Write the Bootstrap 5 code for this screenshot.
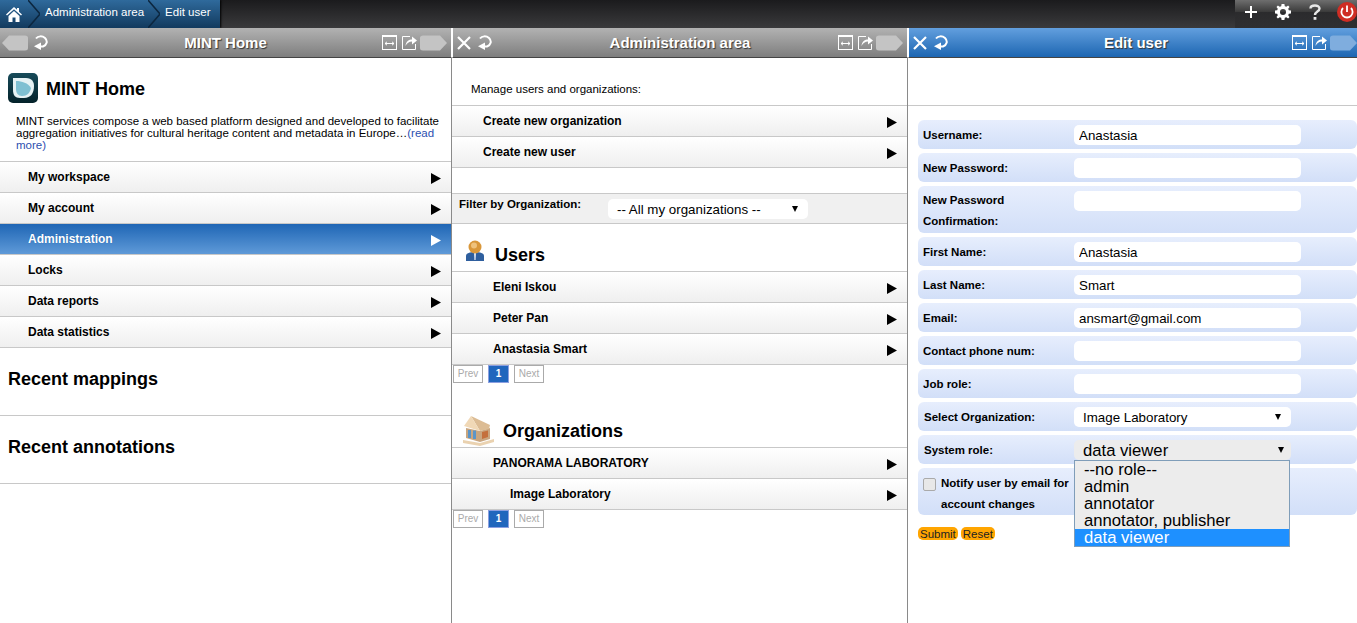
<!DOCTYPE html>
<html lang="en">
<head>
    <meta charset="UTF-8">
    <meta name="viewport" content="width=device-width, initial-scale=1.0">
    <title>MINT - Edit user</title>
    <link rel="stylesheet" href="https://cdn.jsdelivr.net/npm/bootstrap@5.3.0/dist/css/bootstrap.min.css">
    <script defer src="https://cdn.jsdelivr.net/npm/bootstrap@5.3.0/dist/js/bootstrap.bundle.min.js"></script>
    <style>
        html, body { height: 100%; overflow: hidden; }
        body { font-family: "Liberation Sans", Arial, sans-serif; font-size: 11.5px; color: #000; background: #fff; }

        /* top bar */
        .topbar { height: 28px; background: linear-gradient(#1b1b1d, #3a3a3c); }
        .crumbs { height: 28px; width: 220px; background: linear-gradient(#2f6a9c, #123a5e); color: #fff; font-size: 11.5px; box-shadow: 1px 0 2px #000; }
        .crumb-home { width: 28px; padding-left: 6px; }
        .crumb-sep { width: 12px; height: 28px; flex: none; }
        .crumb-text { padding: 0 4px 2px 5px; white-space: nowrap; }
        .tools { width: 122px; height: 28px; background: linear-gradient(#6e6e6e, #3a3a3a 12px, #2b2b2d 12px, #2f2f31); }
        .tool-slot { width: 32px; height: 24px; flex: none; }

        /* panels */
        .panels { height: 595px; }
        .panel-one { width: 452px; }
        .panel-two { width: 456px; }
        .panel-three { width: 449px; }
        .panel-body-one, .panel-body-two { height: 565px; border-right: 1px solid #8a8a8a; }
        .panel-head { height: 30px; display: grid; grid-template-columns: 1fr auto 1fr; align-items: center; border-bottom: 1px solid #444; border-left: 1px solid #fff; }
        .panel-one .panel-head { border-left: 0; border-right: 1px solid #fff; }
        .panel-two .panel-head { border-right: 1px solid #fff; }
        .head-gray { background: linear-gradient(#b2b2b2, #7e7e7e); }
        .head-blue { background: linear-gradient(#629fde, #1d66b2); }
        .head-title { font-size: 15px; font-weight: 700; color: #fff; text-shadow: 1px 1px 1px #333; padding-top: 1px; }
        .panel-three .head-title { padding-left: 6px; }
        .head-left { padding-left: 2px; gap: 5px; }
        .panel-two .head-left, .panel-three .head-left { padding-left: 4px; gap: 6px; }
        .head-right { gap: 5px; padding-right: 4px; }
        .head-right svg:last-child { margin-left: -2px; }
        .panel-three .head-right { padding-right: 0; }

        /* rows */
        .row-list { border-top: 1px solid #c8c8c8; }
        .nav-row { height: 31px; border-bottom: 1px solid #c8c8c8; background: linear-gradient(#fff, #efefef); font-size: 12px; font-weight: 700; padding: 6px 10px 0 28px; color: #000; }
        .panel-body-two .nav-row { padding-left: 31px; }
        .nav-row.is-active { background: linear-gradient(#1f66b5, #5f9ad8); color: #fff; text-shadow: 0 0 1px #1c5ea8; }
        .nav-row svg { margin-top: 5px; flex: none; width: 10px; height: 11px; }
        .panel-body-two .sub-row { padding-left: 41px; }
        .panel-body-two .sub-row-deep { padding-left: 58px; }

        .home-title { padding: 15px 0 0 8px; height: 57px; }
        .mint-h { font-size: 18px; font-weight: 700; margin: 0; line-height: 30px; }
        .home-title .mint-h { margin-top: 1px; }
        .mint-blurb { font-size: 11.5px; line-height: 12px; margin: 0 8px 9px 16px; height: 37px; }
        .mint-blurb a { color: #2c4fb0; text-decoration: none; }
        .recent-box { height: 68px; border-bottom: 1px solid #c8c8c8; padding: 16px 0 0 8px; }

        .manage-note { padding: 24px 0 0 19px; height: 47px; line-height: 14px; }
        .filter-bar { height: 31px; margin-top: 25px; background: #f0f0f0; border-top: 1px solid #c8c8c8; border-bottom: 1px solid #c8c8c8; font-weight: 700; padding: 2px 0 0 7px; }
        .filter-label { width: 149px; }
        .fake-select { height: 20px; border-radius: 5px; background: #fff; font-size: 13.33px; line-height: 19px; padding: 1px 10px 0 9px; }
        .filter-select { width: 200px; margin-top: 3px; font-weight: 400; }
        .sel-arrow { width: 0; height: 0; border-left: 3px solid transparent; border-right: 3px solid transparent; border-top: 6px solid #000; flex: none; margin-top: -2px; }
        .group-head { height: 47px; }
        .group-users { padding: 16px 0 0 14px; gap: 11px; }
        .group-orgs { height: 62px; padding: 31px 0 0 11px; gap: 9px; }
        .pager-wrap { padding: 0 0 0 1px; gap: 5px; height: 20px; }
        .pager-cell { height: 18px; border: 1px solid #aaa; font-size: 10px; color: #aaa; width: 30px; text-align: center; line-height: 16px; background: #fff; }
        .pager-cell.is-now { background: #2066bd; border-color: #8c9fe0; color: #fff; width: 21px; font-weight: 700; }

        /* form */
        .edit-space { height: 48px; border-bottom: 1px solid #c8c8c8; }
        .edit-form { padding: 14px 0 0 10px; position: relative; }
        .form-line { background: linear-gradient(#e7eefd, #d2dff8); border-radius: 6px; min-height: 29px; margin-bottom: 4px; padding: 5px 0 0 5px; font-weight: 700; }
        .form-line label, .line-label { width: 151px; flex: none; line-height: 21px; margin: 0; }
        .line-label { padding-left: 1px; }
        .form-line input.form-control { width: 227px; height: 20px; padding: 1px 5px 0; font-size: 13.33px; border: 0; border-radius: 5px; font-family: inherit; color: #000; background: #fff; min-height: 0; line-height: 19px; }
        .line-tall { height: 47px; }
        .line-tall label { margin-top: -1px; }
        .select-org { width: 217px; font-weight: 400; }
        .select-org.is-open { background: #ececec; font-size: 16.67px; padding-right: 7px; }
        .line-check { padding-top: 6px; }
        .line-check .form-check-input { width: 13px; height: 13px; margin: 4px 5px 0 0; border-radius: 2px; border: 1px solid #aaa; background-color: #e8e8e8; flex: none; }
        .check-text { width: 135px; line-height: 21px; margin-top: -1px; }
        .button-line { gap: 3px; padding-top: 8px; }
        .orange-btn { background: #ffa500; border: 0; border-radius: 5px; padding: 0 2px; font-size: 11.5px; line-height: 12px; height: 13px; color: #222; font-family: inherit; }
        .role-menu { position: absolute; left: 166px; top: 354px; width: 216px; height: 87px; border: 1px solid #7f9db9; background: #ececec; font-size: 16.67px; line-height: 17px; z-index: 5; list-style: none; margin: 0; padding: 0; font-weight: 400; }
        .role-menu li { height: 17px; padding-left: 9px; }
        .role-menu li.is-picked { background: #1e90ff; color: #fff; }
    </style>
</head>
<body>
    <!-- shared icons for the panel headers -->
    <svg class="d-none">
        <symbol id="ic-back" viewBox="0 0 26 16"><path d="M0 8 L7 0.5 H23 Q26 0.5 26 3 V13 Q26 15.5 23 15.5 H7 Z"/></symbol>
        <symbol id="ic-next" viewBox="0 0 27 16"><path d="M27 8 L20 0.5 H3 Q0 0.5 0 3 V13 Q0 15.5 3 15.5 H20 Z"/></symbol>
        <symbol id="ic-close" viewBox="0 0 14 14"><path d="M1 1 L13 13 M13 1 L1 13" stroke="#fff" stroke-width="2.2"/></symbol>
        <symbol id="ic-reload" viewBox="0 0 15 15"><path fill="none" stroke="#fff" stroke-width="2" d="M3 3.5 C5 1 9 0.5 12 3 C15 6 14 10 10 11.5 L7 11.5"/><path fill="#fff" d="M8 7.5 V15 L1 11.2 Z"/></symbol>
        <symbol id="ic-fit" viewBox="0 0 15 15"><rect x=".5" y=".5" width="14" height="14" fill="none" stroke="#fff"/><rect width="15" height="2" fill="#fff"/><path d="M3 8.5 H12 M3 8.5 L5 6.8 M3 8.5 L5 10.2 M12 8.5 L10 6.8 M12 8.5 L10 10.2" stroke="#fff" fill="none"/></symbol>
        <symbol id="ic-share" viewBox="0 0 15 15"><path d="M8 1.5 H.5 V14.5 H13.5 V9" fill="none" stroke="#fff"/><path d="M3.5 11 C4 6 7 4.5 10 4.5 V1.5 L15 5.5 L10 9.5 V6.5 C7 6.5 5 8 3.5 11 Z" fill="#fff"/></symbol>
        <symbol id="ic-go" viewBox="0 0 11 12"><path d="M0 0 L11 6 L0 12 Z"/></symbol>
    </svg>

    <!-- top bar -->
    <div class="topbar d-flex justify-content-between">
        <div class="crumbs d-flex align-items-center">
            <div class="crumb-home d-flex align-items-center">
                <svg width="16" height="15" viewBox="0 0 16 15"><path fill="#fff" d="M8 0 L11 2.8 V1 H13 V4.7 L16 7.5 L15 8.5 L8 2.2 L1 8.5 L0 7.5 Z M2.5 9 L8 4 L13.5 9 V15 H9.5 V10.5 H6.5 V15 H2.5 Z"/></svg>
            </div>
            <svg class="crumb-sep" viewBox="0 0 12 28"><path d="M0 0 L12 14 L0 28" fill="none" stroke="#0c2740" stroke-width="1.5"/></svg>
            <div class="crumb-text">Administration area</div>
            <svg class="crumb-sep" viewBox="0 0 12 28"><path d="M0 0 L12 14 L0 28" fill="none" stroke="#0c2740" stroke-width="1.5"/></svg>
            <div class="crumb-text">Edit user</div>
        </div>
        <div class="tools d-flex">
            <div class="tool-slot d-flex align-items-center justify-content-center">
                <svg width="12" height="12" viewBox="0 0 12 12"><path fill="#fff" d="M5 0 H7 V5 H12 V7 H7 V12 H5 V7 H0 V5 H5 Z"/></svg>
            </div>
            <div class="tool-slot d-flex align-items-center justify-content-center">
                <svg width="16" height="16" viewBox="0 0 16 16"><path fill="#fff" fill-rule="evenodd" d="M6.6 0 H9.4 L9.8 2.2 L11.3 2.8 L13.1 1.5 L14.5 2.9 L13.2 4.7 L13.8 6.2 L16 6.6 V9.4 L13.8 9.8 L13.2 11.3 L14.5 13.1 L13.1 14.5 L11.3 13.2 L9.8 13.8 L9.4 16 H6.6 L6.2 13.8 L4.7 13.2 L2.9 14.5 L1.5 13.1 L2.8 11.3 L2.2 9.8 L0 9.4 V6.6 L2.2 6.2 L2.8 4.7 L1.5 2.9 L2.9 1.5 L4.7 2.8 L6.2 2.2 Z M8 5 A3 3 0 1 0 8 11 A3 3 0 1 0 8 5 Z"/></svg>
            </div>
            <div class="tool-slot d-flex align-items-center justify-content-center">
                <svg width="12" height="16" viewBox="0 0 12 16"><path fill="none" stroke="#e8e8e8" stroke-width="2.4" d="M1.5 4.5 C1.5 0.5 10.5 0.5 10.5 4.5 C10.5 7.5 6 7.5 6 11"/><rect x="4.6" y="13" width="2.8" height="2.8" fill="#e8e8e8"/></svg>
            </div>
            <div class="tool-slot d-flex align-items-center justify-content-center">
                <svg width="20" height="20" viewBox="0 0 20 20"><circle cx="10" cy="10" r="10" fill="#cf2d24"/><path d="M6 6 A5.6 5.6 0 1 0 14 6 M10 3.5 V10" fill="none" stroke="#fff" stroke-width="1.8"/></svg>
            </div>
        </div>
    </div>

    <div class="panels d-flex">
        <!-- MINT Home -->
        <section class="panel-one flex-none">
            <header class="panel-head head-gray">
                <div class="head-left d-flex align-items-center">
                    <svg width="26" height="16" fill="#c4c4c4"><use href="#ic-back"/></svg>
                    <svg width="15" height="15"><use href="#ic-reload"/></svg>
                </div>
                <div class="head-title">MINT Home</div>
                <div class="head-right d-flex align-items-center justify-content-end">
                    <svg width="15" height="15"><use href="#ic-fit"/></svg>
                    <svg width="15" height="15"><use href="#ic-share"/></svg>
                    <svg width="27" height="16" fill="#c4c4c4"><use href="#ic-next"/></svg>
                </div>
            </header>
            <div class="panel-body-one">
                <div class="home-title d-flex align-items-start gap-2">
                    <svg width="30" height="30" viewBox="0 0 30 30"><defs><linearGradient id="lg1" x1="0" y1="0" x2="0" y2="1"><stop offset="0" stop-color="#174b5a"/><stop offset="1" stop-color="#04222a"/></linearGradient></defs><rect width="30" height="30" rx="5" fill="url(#lg1)"/><path d="M5 5 H18 C24 5 26 9 26 13 C26 20 23 25 16 25 H12 C7 25 5 22 5 17 Z" fill="#e6f2f4"/><path d="M8 8 C14 8 20 10 23 15 C22 20 19 23 14 23 C10 23 8 20 8 16 Z" fill="#7fc0d2"/></svg>
                    <h1 class="mint-h">MINT Home</h1>
                </div>
                <p class="mint-blurb">MINT services compose a web based platform designed and developed to facilitate aggregation initiatives for cultural heritage content and metadata in Europe…<a href="#">(read more)</a></p>
                <div class="row-list">
                    <div class="nav-row d-flex justify-content-between"><span>My workspace</span><svg><use href="#ic-go"/></svg></div>
                    <div class="nav-row d-flex justify-content-between"><span>My account</span><svg><use href="#ic-go"/></svg></div>
                    <div class="nav-row is-active d-flex justify-content-between"><span>Administration</span><svg fill="#fff"><use href="#ic-go"/></svg></div>
                    <div class="nav-row d-flex justify-content-between"><span>Locks</span><svg><use href="#ic-go"/></svg></div>
                    <div class="nav-row d-flex justify-content-between"><span>Data reports</span><svg><use href="#ic-go"/></svg></div>
                    <div class="nav-row d-flex justify-content-between"><span>Data statistics</span><svg><use href="#ic-go"/></svg></div>
                </div>
                <div class="recent-box"><h2 class="mint-h">Recent mappings</h2></div>
                <div class="recent-box"><h2 class="mint-h">Recent annotations</h2></div>
            </div>
        </section>

        <!-- Administration area -->
        <section class="panel-two flex-none">
            <header class="panel-head head-gray">
                <div class="head-left d-flex align-items-center">
                    <svg width="14" height="14"><use href="#ic-close"/></svg>
                    <svg width="15" height="15"><use href="#ic-reload"/></svg>
                </div>
                <div class="head-title">Administration area</div>
                <div class="head-right d-flex align-items-center justify-content-end">
                    <svg width="15" height="15"><use href="#ic-fit"/></svg>
                    <svg width="15" height="15"><use href="#ic-share"/></svg>
                    <svg width="27" height="16" fill="#c4c4c4"><use href="#ic-next"/></svg>
                </div>
            </header>
            <div class="panel-body-two">
                <div class="manage-note">Manage users and organizations:</div>
                <div class="row-list">
                    <div class="nav-row d-flex justify-content-between"><span>Create new organization</span><svg><use href="#ic-go"/></svg></div>
                    <div class="nav-row d-flex justify-content-between"><span>Create new user</span><svg><use href="#ic-go"/></svg></div>
                </div>
                <div class="filter-bar d-flex">
                    <div class="filter-label">Filter by Organization:</div>
                    <div class="fake-select filter-select d-flex align-items-center justify-content-between"><span>-- All my organizations --</span><i class="sel-arrow"></i></div>
                </div>
                <div class="group-head group-users d-flex">
                    <svg width="18" height="21" viewBox="0 0 18 21"><path d="M0 21 V16 C0 13 4 12 9 12 C14 12 18 13 18 16 V21 Z" fill="#2f5f9e"/><path d="M8 13 H10 L9.6 20 H8.4 Z" fill="#dfe8f5"/><circle cx="9" cy="7" r="6.5" fill="#d9973a"/><circle cx="8" cy="5.5" r="3" fill="#efc27c"/></svg>
                    <h2 class="mint-h">Users</h2>
                </div>
                <div class="row-list">
                    <div class="nav-row sub-row d-flex justify-content-between"><span>Eleni Iskou</span><svg><use href="#ic-go"/></svg></div>
                    <div class="nav-row sub-row d-flex justify-content-between"><span>Peter Pan</span><svg><use href="#ic-go"/></svg></div>
                    <div class="nav-row sub-row d-flex justify-content-between"><span>Anastasia Smart</span><svg><use href="#ic-go"/></svg></div>
                </div>
                <div class="pager-wrap d-flex">
                    <div class="pager-cell">Prev</div>
                    <div class="pager-cell is-now">1</div>
                    <div class="pager-cell">Next</div>
                </div>
                <div class="group-head group-orgs d-flex">
                    <svg width="31" height="30" viewBox="0 0 31 30"><path d="M3 12 L17 15 L27 12 V23 L17 26 L3 22 Z" fill="#c9a67f"/><path d="M5 14 H8 V22 H5 Z M10 14.5 H13 V23 H10 Z" fill="#5b95c8"/><path d="M19 16 L25 14.5 V21 L19 23 Z" fill="#c4703c"/><path d="M8 0 L27 9 L26 13 L17 15 Z" fill="#dcbc94"/><path d="M1 10 L8 0 L17 15 Z" fill="#f0d8b6"/><path d="M0 24 L17 27 L31 23 V26 L17 30 L0 27 Z" fill="#ead2b0"/></svg>
                    <h2 class="mint-h">Organizations</h2>
                </div>
                <div class="row-list">
                    <div class="nav-row sub-row d-flex justify-content-between"><span>PANORAMA LABORATORY</span><svg><use href="#ic-go"/></svg></div>
                    <div class="nav-row sub-row-deep d-flex justify-content-between"><span>Image Laboratory</span><svg><use href="#ic-go"/></svg></div>
                </div>
                <div class="pager-wrap d-flex">
                    <div class="pager-cell">Prev</div>
                    <div class="pager-cell is-now">1</div>
                    <div class="pager-cell">Next</div>
                </div>
            </div>
        </section>

        <!-- Edit user -->
        <section class="panel-three flex-none">
            <header class="panel-head head-blue">
                <div class="head-left d-flex align-items-center">
                    <svg width="14" height="14"><use href="#ic-close"/></svg>
                    <svg width="15" height="15"><use href="#ic-reload"/></svg>
                </div>
                <div class="head-title">Edit user</div>
                <div class="head-right d-flex align-items-center justify-content-end">
                    <svg width="15" height="15"><use href="#ic-fit"/></svg>
                    <svg width="15" height="15"><use href="#ic-share"/></svg>
                    <svg width="27" height="16" fill="#7fadde"><use href="#ic-next"/></svg>
                </div>
            </header>
            <div class="edit-space"></div>
            <form class="edit-form">
                <div class="form-line d-flex"><label>Username:</label><input class="form-control" type="text" value="Anastasia"></div>
                <div class="form-line d-flex"><label>New Password:</label><input class="form-control" type="text"></div>
                <div class="form-line line-tall d-flex"><label>New Password Confirmation:</label><input class="form-control" type="text"></div>
                <div class="form-line d-flex"><label>First Name:</label><input class="form-control" type="text" value="Anastasia"></div>
                <div class="form-line d-flex"><label>Last Name:</label><input class="form-control" type="text" value="Smart"></div>
                <div class="form-line d-flex"><label>Email:</label><input class="form-control" type="text" value="ansmart@gmail.com"></div>
                <div class="form-line d-flex"><label>Contact phone num:</label><input class="form-control" type="text"></div>
                <div class="form-line d-flex"><label>Job role:</label><input class="form-control" type="text"></div>
                <div class="form-line d-flex"><div class="line-label">Select Organization:</div><div class="fake-select select-org d-flex align-items-center justify-content-between"><span>Image Laboratory</span><i class="sel-arrow"></i></div></div>
                <div class="form-line d-flex"><div class="line-label">System role:</div><div class="fake-select select-org is-open d-flex align-items-center justify-content-between"><span>data viewer</span><i class="sel-arrow"></i></div></div>
                <div class="form-line line-tall line-check d-flex"><input class="form-check-input" type="checkbox"><div class="check-text">Notify user by email for account changes</div></div>
                <div class="button-line d-flex">
                    <button class="orange-btn" type="button">Submit</button>
                    <button class="orange-btn" type="button">Reset</button>
                </div>
                <ul class="role-menu">
                    <li>--no role--</li>
                    <li>admin</li>
                    <li>annotator</li>
                    <li>annotator, publisher</li>
                    <li class="is-picked">data viewer</li>
                </ul>
            </form>
        </section>
    </div>
</body>
</html>
